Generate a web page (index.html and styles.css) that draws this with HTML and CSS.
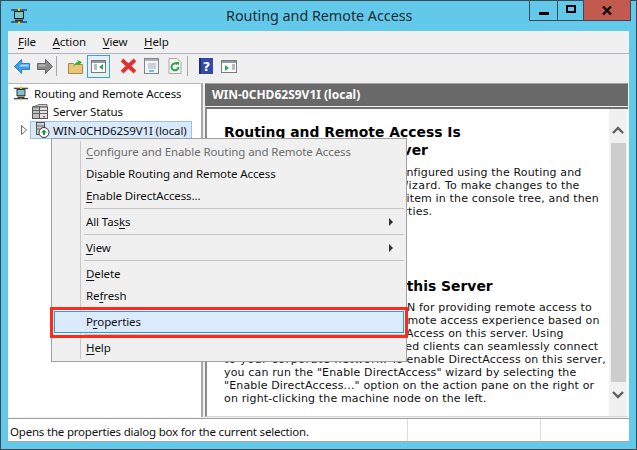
FILE: index.html
```html
<!DOCTYPE html>
<html lang="en">
<head>
<meta charset="utf-8">
<title>Routing and Remote Access</title>
<link rel="stylesheet" href="styles.css">
</head>
<body>
<div class="window">
  <header class="titlebar">
    <svg class="app-icon" width="18" height="16" viewBox="0 0 18 16"><path d="M1 2h16M1 14h16" stroke="#111" stroke-width="1.2"/><rect x="8" y="0" width="2" height="3" fill="#e8c820"/><rect x="8" y="13" width="2" height="3" fill="#e8c820"/><rect x="4.5" y="3.500" width="9" height="7" fill="#7fc4c8" stroke="#222"/><path d="M5 12.500h8" stroke="#333" stroke-width="2"/></svg>
    <div class="title">Routing and Remote Access</div>
    <div class="caption-buttons">
      <div class="cap cap-min"><span class="min-glyph"></span></div>
      <div class="cap cap-max"><span class="max-glyph"></span></div>
      <div class="cap cap-close"><svg width="10" height="9" viewBox="0 0 10 9"><path d="M1 0.500l8 8M9 0.500l-8 8" stroke="#111" stroke-width="2.400"/></svg></div>
    </div>
  </header>
  <div class="client">
    <nav class="menubar">
      <span class="menu-label"><u>F</u>ile</span>
      <span class="menu-label"><u>A</u>ction</span>
      <span class="menu-label"><u>V</u>iew</span>
      <span class="menu-label"><u>H</u>elp</span>
    </nav>
    <div class="toolbar">
      <span class="tool"><svg width="16" height="15" viewBox="0 0 16 15"><path d="M0.500 7.500l7-7v4h8v6h-8v4z" fill="#3f9de6" stroke="#2a80cc"/><path d="M7 5.500h7.500v2H5z" fill="#a8d8f8"/></svg></span>
      <span class="tool"><svg width="16" height="15" viewBox="0 0 16 15"><path d="M15.500 7.500l-7-7v4h-8v6h8v4z" fill="#8a8a8a" stroke="#666"/><path d="M1.500 5.500h7v2h-7z" fill="#b5b5b5"/></svg></span>
      <span class="tool-sep tool-sep-a"></span>
      <span class="tool"><svg width="15" height="15" viewBox="0 0 15 15"><path d="M0.500 4.500h5l1 1h8v9H0.500z" fill="#e8c878" stroke="#a88a40"/><path d="M5 8c1-3 3-5 5-5L9 1l5 2-3 3-1-1C8 5 7 6 5 8z" fill="#3cae3c"/></svg></span>
      <span class="tool tool-active"><svg width="15" height="13" viewBox="0 0 15 13"><rect x="0.500" y="0.500" width="14" height="12" fill="#fff" stroke="#7a7a7a"/><rect x="1" y="1" width="13" height="2" fill="#8e9aa8"/><path d="M3 5h3M3 7h3M3 9h3" stroke="#6a7a90"/><path d="M12 4v6L8 7z" fill="#2fa84f"/></svg></span>
      <span class="tool tool-delete"><svg width="17" height="16" viewBox="0 0 17 16"><path d="M2 2l13 12M15 2L2 14" stroke="#e03030" stroke-width="3.800"/></svg></span>
      <span class="tool"><svg width="15" height="16" viewBox="0 0 15 16"><rect x="0.500" y="0.500" width="14" height="15" fill="#f4f4f4" stroke="#7e8690"/><rect x="1" y="1" width="13" height="2" fill="#aab2bc"/><path d="M4 6h8M4 8h8M4 10h8" stroke="#9ab0c4"/><path d="M5 13h5" stroke="#40b0e0" stroke-width="1.500"/></svg></span>
      <span class="tool"><svg width="14" height="16" viewBox="0 0 13 16"><path d="M0.500 0.500h8l4 4v11H0.500z" fill="#f6f6f6" stroke="#a8a8a8"/><path d="M10 9a3.500 3.500 0 1 1-1.200-2.800" fill="none" stroke="#2aa84a" stroke-width="2"/><path d="M7 4l3.500 0v3.500z" fill="#2aa84a"/></svg></span>
      <span class="tool-sep tool-sep-b"></span>
      <span class="tool"><svg width="14" height="16" viewBox="0 0 14 16"><rect width="14" height="16" fill="#2f4aa8"/><rect x="0" y="0" width="2" height="16" fill="#1c2f78"/><text x="7.500" y="13" class="help-mark">?</text></svg></span>
      <span class="tool"><svg width="16" height="13" viewBox="0 0 16 13"><rect x="0.500" y="0.500" width="15" height="12" fill="#fff" stroke="#7a7a7a"/><rect x="1" y="1" width="14" height="2" fill="#8e9aa8"/><path d="M4 5v6l4-3z" fill="#2fa84f"/><path d="M11 5h3M11 7h3M11 9h3" stroke="#6a7a90"/></svg></span>
    </div>
    <main class="panes">
      <aside class="tree">
        <div class="tree-row tree-root">
          <svg class="tree-icon" width="16" height="15" viewBox="0 0 18 16"><path d="M1 2h16M1 14h16" stroke="#111" stroke-width="1.200"/><rect x="8" y="0" width="2" height="3" fill="#e8c820"/><rect x="8" y="13" width="2" height="3" fill="#e8c820"/><rect x="4.500" y="3.500" width="9" height="7" fill="#7fc4c8" stroke="#222"/><path d="M5 12.500h8" stroke="#333" stroke-width="2"/></svg>
          <span>Routing and Remote Access</span>
        </div>
        <div class="tree-row tree-child">
          <svg class="tree-icon" width="16" height="15" viewBox="0 0 16 15"><path d="M1 3l6-2.500h8V3z" fill="#d8d8d8" stroke="#555" stroke-width=".8"/><rect x="0.500" y="3" width="7" height="11.500" fill="#bdbdbd" stroke="#555"/><rect x="7.500" y="3" width="8" height="11.500" fill="#e4e4e4" stroke="#555"/><path d="M1 6.500h6M1 9.500h6M8 6.500h7M8 9.500h7" stroke="#666"/><rect x="11" y="12" width="2" height="1.500" fill="#d04040"/></svg>
          <span>Server Status</span>
        </div>
        <div class="tree-row tree-server">
          <svg class="expander" width="6" height="10" viewBox="0 0 6 10"><path d="M.5.5l5 4.500-5 4.500z" fill="#fff" stroke="#666"/></svg>
          <div class="tree-selected">
            <svg class="tree-icon" width="15" height="16" viewBox="0 0 15 16"><rect x="1.500" y="0.500" width="8" height="12" fill="#cfcfcf" stroke="#555"/><path d="M2 4h7M2 7h7" stroke="#666"/><circle cx="9" cy="10.500" r="5" fill="#fff" stroke="#333"/><path d="M9 7.500l3 3h-2v2.500H8v-2.500H6z" fill="#1f9a3a"/></svg>
            <span>WIN-0CHD62S9V1I (local)</span>
          </div>
        </div>
      </aside>
      <section class="detail">
        <div class="detail-header">WIN-0CHD62S9V1I (local)</div>
        <div class="detail-frame">
          <article class="detail-body">
            <h2 class="h-first">Routing and Remote Access Is<br>Configured on This Server</h2>
            <p class="p-first"><span class="tight">Routing and Remote Access is</span> configured using the Routing and<br><span class="wide">Remote Access Server Setup Wizard.</span> To make changes to the<br>configuration right-click the top item in the console tree, and then<br>click on the menu option, Properties.</p>
            <h2 class="h-second"><span class="tighter">Enable DirectAccess</span> on this Server</h2>
            <p class="p-second">You can deploy this server as VPN for providing remote access to<br>clients, or provide a seamless remote access experience based on<br>deployment and enabling DirectAccess on this server. Using<br>DirectAccess, these domain-joined clients can seamlessly connect<br><span class="wider">to your corporate network.</span> To enable DirectAccess on this server,<br>you can run the "Enable DirectAccess" wizard by selecting the<br>"Enable DirectAccess..." option on the action pane on the right or<br>on right-clicking the machine node on the left.</p>
          </article>
          <div class="scrollbar">
            <svg width="12" height="8" viewBox="0 0 12 8"><path d="M1 7l5-5 5 5" fill="none" stroke="#606060" stroke-width="2.400"/></svg>
            <div class="thumb"></div>
            <svg width="12" height="8" viewBox="0 0 12 8"><path d="M1 1l5 5 5-5" fill="none" stroke="#606060" stroke-width="2.400"/></svg>
          </div>
        </div>
      </section>
    </main>
    <footer class="statusbar">
      <div class="status-main">Opens the properties dialog box for the current selection.</div>
      <div class="status-mid"></div>
      <div class="status-end"></div>
    </footer>
  </div>
  <div class="context-menu">
    <div class="item disabled"><u>C</u>onfigure and Enable Routing and Remote Access</div>
    <div class="item">Di<u>s</u>able Routing and Remote Access</div>
    <div class="item"><u>E</u>nable DirectAccess...</div>
    <div class="sep"></div>
    <div class="item">All Tas<u>k</u>s<i class="arrow"></i></div>
    <div class="sep"></div>
    <div class="item"><u>V</u>iew<i class="arrow"></i></div>
    <div class="sep"></div>
    <div class="item"><u>D</u>elete</div>
    <div class="item">Re<u>f</u>resh</div>
    <div class="sep"></div>
    <div class="item hot">P<u>r</u>operties</div>
    <div class="sep"></div>
    <div class="item"><u>H</u>elp</div>
  </div>
  <div class="callout"></div>
</div>
</body>
</html>
```
FILE: styles.css
```css
* { box-sizing: border-box; }
html, body { margin: 0; padding: 0; }
body { width: 637px; height: 450px; overflow: hidden; font-family: "Noto Sans", "Open Sans", sans-serif; font-size: 11.5px; letter-spacing: -0.1px; color: #111; }
u { text-decoration-thickness: 1px; text-underline-offset: 2px; }

.window { position: relative; width: 637px; height: 450px; display: flex; flex-direction: column; background: #63c9eb; border: 1px solid #3e4a52; }

.titlebar { display: flex; height: 30px; flex: none; }
.app-icon { margin: 7px 0 0 9px; flex: none; }
.title { font-size: 14.4px; letter-spacing: -0.05px; line-height: 29px; color: #1c2b33; margin-left: 198px; white-space: nowrap; }
.caption-buttons { margin-left: auto; display: flex; height: 21px; margin-right: 5px; margin-top: -1px; border: 1px solid #3e4a52; border-top: 0; }
.cap { display: flex; align-items: center; justify-content: center; border-right: 1px solid #3e4a52; }
.cap-min { width: 28px; }
.cap-max { width: 26px; }
.cap-close { width: 46px; background: #c25a50; border-right: 0; }
.min-glyph { display: block; width: 10px; height: 3px; background: #000; margin-top: 6px; }
.max-glyph { display: block; width: 10px; height: 8px; border: 2px solid #000; margin-top: -2px; }

.client { margin: 0 7px 7px 7px; flex: 1; display: flex; flex-direction: column; background: #f0f0f0; min-height: 0; }
.menubar { height: 23px; flex: none; display: flex; align-items: center; padding: 0 0 1px 10px; gap: 16.6px; border-bottom: 1px solid #b4b4c0; background: #f0f0f0; }
.menubar .menu-label { line-height: 16px; }
.toolbar { height: 29px; flex: none; display: flex; align-items: center; padding: 0 0 5px 2px; }
.tool { width: 23px; height: 23px; display: flex; align-items: center; justify-content: center; flex: none; }
.tool-sep { width: 1px; height: 20px; background: #a8a8a8; flex: none; }
.tool-sep-a { margin-right: 7px; }
.tool-sep-b { margin: 0 6px 0 1px; }
.tool-active { background: #e6eef6; border: 1px solid #3ca0dc; }
.tool-delete { margin-left: 7px; }
.help-mark { font-family: "DejaVu Sans", sans-serif; font-size: 13px; font-weight: 700; fill: #fff; text-anchor: middle; }

.panes { flex: 1; min-height: 0; display: flex; }
.tree { width: 195px; flex: none; background: #fff; border-right: 2px solid #a9a9a9; border-top: 1px solid #b8b8b8; }
.tree-row { height: 18px; display: flex; align-items: center; white-space: nowrap; }
.tree-root { padding-left: 5px; gap: 5px; }
.tree-child { padding-left: 24px; gap: 5px; }
.tree-server { padding-left: 10px; margin-top: 1px; }
.expander { margin-right: 6px; flex: none; margin-left: 3px; }
.tree-selected { width: 162px; height: 18px; margin-left: -3px; display: flex; align-items: center; gap: 3px; padding-left: 4px; background: #d9e8fb; border: 1px solid #9dc1e6; }

.detail { flex: 1; min-width: 0; margin-left: 2px; margin-right: 1px; display: flex; flex-direction: column; }
.detail-header { height: 23px; flex: none; background: #696969; color: #fff; font-size: 12px; letter-spacing: 0; font-weight: 700; line-height: 22px; padding-left: 7px; border-top: 1px solid #a0a0a0; }
.detail-frame { flex: 1; min-height: 0; margin-top: 1px; display: flex; background: #fff; border-top: 2px solid #6e6e6e; border-left: 2px solid #8c8c8c; border-bottom: 1px solid #d8d8d8; }
.detail-body { flex: 1; min-width: 0; padding: 14px 0 0 17px; font-family: "DejaVu Sans", sans-serif; font-size: 11px; letter-spacing: 0.15px; line-height: 13px; color: #111; white-space: nowrap; overflow: hidden; }
.detail-body h2 { margin: 0; font-size: 13.9px; letter-spacing: 0; line-height: 18px; font-weight: 700; color: #000; }
.detail-body p { margin: 0; }
.p-first { padding-top: 7px; }
.h-second { padding-top: 59px; }
.p-second { padding-top: 6px; }
.tight { letter-spacing: 0; }
.detail-body h2 .tighter { letter-spacing: -0.25px; }
.wide { letter-spacing: 0.42px; }
.wider { letter-spacing: 0.6px; }
.scrollbar { width: 18px; flex: none; background: #f0f0f0; display: flex; flex-direction: column; align-items: center; padding: 17px 0; margin-right: 1px; }
.scrollbar svg { flex: none; }
.thumb { flex: 1; width: 15px; background: #cdcdcd; margin: 9px 0; }

.statusbar { height: 24px; flex: none; display: flex; background: #fff; border-top: 1px solid #a0a0a0; border-bottom: 1px solid #a8a8a8; margin-top: 1px; line-height: 25px; }
.status-main { width: 400px; padding-left: 2px; border-right: 1px solid #dcdcdc; white-space: nowrap; letter-spacing: -0.2px; }
.status-mid { width: 133px; border-right: 1px solid #dcdcdc; }
.status-end { flex: 1; }

.context-menu { position: absolute; left: 50px; top: 137px; width: 356px; height: 224px; background-color: #f0f0f0; border: 1px solid #a0a0a0; padding: 2px 2px 1px; background-image: linear-gradient(#c8c8c8, #c8c8c8); background-size: 1px 218px; background-position: 28px 2px; background-repeat: no-repeat; }
.item { position: relative; height: 22px; line-height: 21px; padding-left: 32px; white-space: nowrap; color: #111; }
.item.disabled { color: #6d6d6d; }
.sep { height: 1px; margin: 1px 0 2px 30px; background: #c4c4c4; }
.arrow { position: absolute; right: 11px; top: 7px; border-left: 4px solid #333; border-top: 4px solid transparent; border-bottom: 4px solid transparent; }
.item.hot { background: #dbeafc; border: 1px solid #26a0da; padding-left: 31px; line-height: 19px; }
.callout { position: absolute; left: 49px; top: 306px; width: 358px; height: 31px; border: 3px solid #ff2a1a; }
```
